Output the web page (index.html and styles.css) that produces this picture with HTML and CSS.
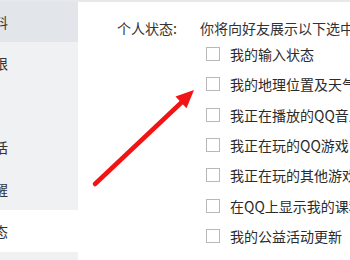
FILE: index.html
```html
<!DOCTYPE html>
<html lang="zh-CN">
<head>
<meta charset="utf-8">
<link rel="stylesheet" href="styles.css">
</head>
<body>
<div class="page">
  <div class="topbar"></div>
  <div class="layout">
    <nav class="sidebar">
      <div class="nav-item hover first"><span>个人资料</span></div>
      <div class="nav-item"><span>空间权限</span></div>
      <div class="nav-item"><span>防骚扰</span></div>
      <div class="nav-item"><span>临时会话</span></div>
      <div class="nav-item"><span>消息提醒</span></div>
      <div class="nav-item active"><span>个人状态</span></div>
      <div class="nav-item"><span>其他设置</span></div>
    </nav>
    <main class="main">
      <div class="header">
        <span class="label">个人状态:</span>
        <span class="desc">你将向好友展示以下选中的状态</span>
      </div>
      <ul class="options">
        <li class="option"><span class="box"></span><span class="text">我的输入状态</span></li>
        <li class="option"><span class="box"></span><span class="text">我的地理位置及天气</span></li>
        <li class="option"><span class="box"></span><span class="text">我正在播放的QQ音乐</span></li>
        <li class="option"><span class="box"></span><span class="text">我正在玩的QQ游戏</span></li>
        <li class="option"><span class="box"></span><span class="text">我正在玩的其他游戏</span></li>
        <li class="option"><span class="box"></span><span class="text">在QQ上显示我的课程表</span></li>
        <li class="option"><span class="box"></span><span class="text">我的公益活动更新</span></li>
      </ul>
    </main>
  </div>
  <svg class="arrow" width="350" height="260" viewBox="0 0 350 260">
    <line x1="95" y1="184" x2="183" y2="101" stroke="#f21414" stroke-width="4.5" stroke-linecap="round"/>
    <polygon points="194,90 186.5,108.2 175.5,96.6" fill="#f21414"/>
  </svg>
</div>
</body>
</html>
```
FILE: styles.css
```css
html, body {
  margin: 0;
  padding: 0;
  background: #ffffff;
}
.page {
  position: relative;
  width: 350px;
  height: 260px;
  overflow: hidden;
  font-family: "Noto Sans CJK SC", "Noto Sans", sans-serif;
  font-size: 14px;
  color: #333333;
}
.topbar {
  height: 2px;
  background: #e6e8eb;
}
.layout {
  display: flex;
  height: 258px;
}
.sidebar {
  width: 78px;
  flex: none;
  background: #f0f1f3;
  overflow: hidden;
}
.nav-item {
  height: 42px;
  display: flex;
  align-items: center;
  white-space: nowrap;
  text-indent: -48px;
  color: #333333;
}
.nav-item.first {
  height: 40px;
}
.nav-item.hover {
  background: #e2e6ea;
}
.nav-item.active {
  background: #ffffff;
}
.main {
  flex: 1;
  padding-top: 15px;
  overflow: hidden;
  white-space: nowrap;
}
.header {
  display: flex;
  height: 22px;
  line-height: 22px;
  padding-left: 39px;
}
.label {
  width: 83px;
  flex: none;
}
.desc {
  flex: none;
}
.options {
  list-style: none;
  margin: 0;
  padding: 0 0 0 128px;
}
.option {
  height: 30.33px;
  display: flex;
  align-items: center;
  gap: 10px;
  color: #2b2b2b;
}
.box {
  width: 12px;
  height: 12px;
  border: 1px solid #b8b8b8;
  background: #ffffff;
  flex: none;
}
.text {
  flex: none;
}
.arrow {
  position: absolute;
  left: 0;
  top: 0;
  pointer-events: none;
}
```
